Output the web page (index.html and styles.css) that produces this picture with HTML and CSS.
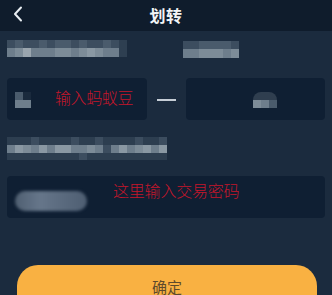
FILE: index.html
```html
<!DOCTYPE html>
<html>
<head>
<meta charset="utf-8">
<link rel="stylesheet" href="styles.css">
</head>
<body>
<div class="page">
  <header class="topbar">
    <svg class="back" width="12" height="16" viewBox="0 0 12 16"><path d="M9 1.5 L3 8 L9 14.5" fill="none" stroke="#e8edf2" stroke-width="2" stroke-linecap="round" stroke-linejoin="round"/></svg>
    <div class="title">划转</div>
  </header>

  <div class="row-info">
    <div class="mosaic m1">
      <span class="c a"></span><span class="c b"></span><span class="c a"></span><span class="c a"></span><span class="c b"></span><span class="c a"></span><span class="c b"></span><span class="c b"></span><span class="c a"></span><span class="c b"></span><span class="c a"></span><span class="c a"></span><span class="c b"></span><span class="c a"></span><span class="c f"></span>
      <span class="c d"></span><span class="c e"></span><span class="c z"></span><span class="c d"></span><span class="c d"></span><span class="c d"></span><span class="c e"></span><span class="c e"></span><span class="c d"></span><span class="c e"></span><span class="c g"></span><span class="c e"></span><span class="c d"></span><span class="c d"></span><span class="c f"></span>
    </div>
    <div class="mosaic m2">
      <span class="c a"></span><span class="c a"></span><span class="c b"></span><span class="c b"></span><span class="c b"></span><span class="c b"></span><span class="c a"></span>
      <span class="c d"></span><span class="c d"></span><span class="c e"></span><span class="c e"></span><span class="c e"></span><span class="c d"></span><span class="c e"></span>
    </div>
  </div>

  <div class="row-inputs">
    <div class="field">
      <div class="mosaic m3">
        <span class="c b"></span><span class="c z"></span>
        <span class="c d"></span><span class="c d"></span>
      </div>
      <span class="hint hint1">输入蚂蚁豆</span>
    </div>
    <div class="dash"></div>
    <div class="field field-center">
      <div class="blob">
        <div class="blob-top"></div>
        <div class="mosaic m4"><span class="c e"></span><span class="c d"></span><span class="c b"></span></div>
      </div>
    </div>
  </div>

  <div class="row-info2">
    <div class="mosaic m5">
      <span class="c y"></span><span class="c y"></span><span class="c y"></span><span class="c a"></span><span class="c y"></span><span class="c y"></span><span class="c y"></span><span class="c y"></span><span class="c a"></span><span class="c y"></span><span class="c y"></span><span class="c a"></span><span class="c y"></span><span class="c y"></span><span class="c y"></span><span class="c y"></span><span class="c a"></span><span class="c y"></span><span class="c y"></span><span class="c a"></span>
      <span class="c d"></span><span class="c g"></span><span class="c e"></span><span class="c d"></span><span class="c g"></span><span class="c d"></span><span class="c g"></span><span class="c g"></span><span class="c d"></span><span class="c d"></span><span class="c e"></span><span class="c d"></span><span class="c a"></span><span class="c d"></span><span class="c g"></span><span class="c d"></span><span class="c e"></span><span class="c g"></span><span class="c d"></span><span class="c g"></span>
      <span class="c y"></span><span class="c y"></span><span class="c y"></span><span class="c y"></span><span class="c y"></span><span class="c y"></span><span class="c y"></span><span class="c y"></span><span class="c y"></span><span class="c a"></span><span class="c y"></span><span class="c y"></span><span class="c y"></span><span class="c y"></span><span class="c y"></span><span class="c y"></span><span class="c y"></span><span class="c y"></span><span class="c y"></span><span class="c y"></span>
    </div>
  </div>

  <div class="field field-wide">
    <div class="pwblob"></div>
    <span class="hint hint2">这里输入交易密码</span>
  </div>

  <div class="btn-wrap">
    <button class="btn">确定</button>
  </div>
</div>
</body>
</html>
```

FILE: styles.css
```css
html, body {
  margin: 0;
  padding: 0;
  background: #1b2b3e;
  overflow: hidden;
}
.page {
  width: 332px;
  height: 295px;
  overflow: hidden;
  background: #1b2b3e;
  font-family: "Noto Sans CJK SC", "Noto Sans", sans-serif;
}
.topbar {
  height: 31px;
  background: #0f1c2c;
  display: flex;
  align-items: center;
  justify-content: center;
  position: relative;
}
.back {
  position: absolute;
  left: 12px;
  top: 6px;
}
.title {
  color: #f2f4f6;
  font-size: 16px;
  font-weight: 700;
  line-height: 20px;
  margin-top: -2px;
  letter-spacing: 0.5px;
}
.row-info {
  display: flex;
  padding: 9px 0 0 7px;
  height: 17px;
}
.mosaic {
  display: grid;
  filter: blur(0.7px);
}
.c { display: block; }
.c.a { background: #3c4d5f; }
.c.b { background: #4a5b6c; }
.c.d { background: #6e7e8c; }
.c.e { background: #7d8c98; }
.c.f { background: #2e3f51; }
.c.g { background: #8a98a3; }
.c.z { background: #9aa5ae; }
.c.y { background: #2d3e50; }
.m1 {
  grid-template-columns: repeat(15, 8px);
  grid-template-rows: 8px 9px;
  width: 120px;
}
.m2 {
  grid-template-columns: repeat(7, 8px);
  grid-template-rows: 8px 9px;
  margin-left: 56px;
  margin-top: 1px;
}
.row-inputs {
  display: flex;
  align-items: center;
  padding: 21px 7px 0 7px;
}
.field {
  width: 140px;
  height: 42px;
  background: #0f1f33;
  border-radius: 4px;
  display: flex;
  align-items: center;
  position: relative;
}
.m3 {
  grid-template-columns: 8px 8px;
  grid-template-rows: 8px 8px;
  margin-left: 8px;
  margin-top: 1px;
}
.m3 .c.z { background: #1a2a3d; }
.hint {
  font-family: "Noto Sans CJK SC", sans-serif;
  font-weight: 300;
  color: #c4162b;
  font-size: 16px;
  line-height: 18px;
}
.hint1 {
  margin-left: 24px;
  margin-top: -4px;
  letter-spacing: -0.4px;
}
.dash {
  width: 19px;
  height: 2px;
  background: #c6ced6;
  margin: 1px 10px 0 10px;
}
.field-center {
  width: 139px;
  justify-content: center;
}
.blob {
  display: flex;
  flex-direction: column;
  align-items: center;
  margin-left: 18px;
  margin-top: 2px;
}
.blob-top {
  width: 24px;
  height: 8px;
  border-radius: 12px 12px 0 0;
  background: #2f3e4f;
  filter: blur(0.6px);
}
.m4 {
  grid-template-columns: 8px 8px 8px;
  grid-template-rows: 8px;
}
.row-info2 {
  padding: 17px 0 0 7px;
  height: 23px;
}
.m5 {
  grid-template-columns: repeat(20, 8px);
  grid-template-rows: 8px 8px 7px;
  width: 160px;
}
.field-wide {
  width: 318px;
  margin: 16px 0 0 7px;
}
.pwblob {
  width: 72px;
  height: 20px;
  margin-left: 8px;
  margin-top: 8px;
  border-radius: 10px;
  background: linear-gradient(90deg, #4f5f71 0%, #66768a 35%, #5c6c80 60%, #4e5e72 100%);
  filter: blur(1.4px);
}
.hint2 {
  margin-left: 26px;
  margin-top: -15px;
  letter-spacing: -0.2px;
}
.btn-wrap {
  padding: 47px 16px 0 17px;
}
.btn {
  width: 300px;
  height: 30px;
  border: none;
  border-radius: 21px 21px 0 0;
  background: #f9b142;
  color: #5e4a2c;
  font-family: "Noto Sans CJK SC", sans-serif;
  font-size: 15px;
  line-height: 16px;
  padding: 13px 0 0 0;
  display: block;
  box-sizing: border-box;
}
```
